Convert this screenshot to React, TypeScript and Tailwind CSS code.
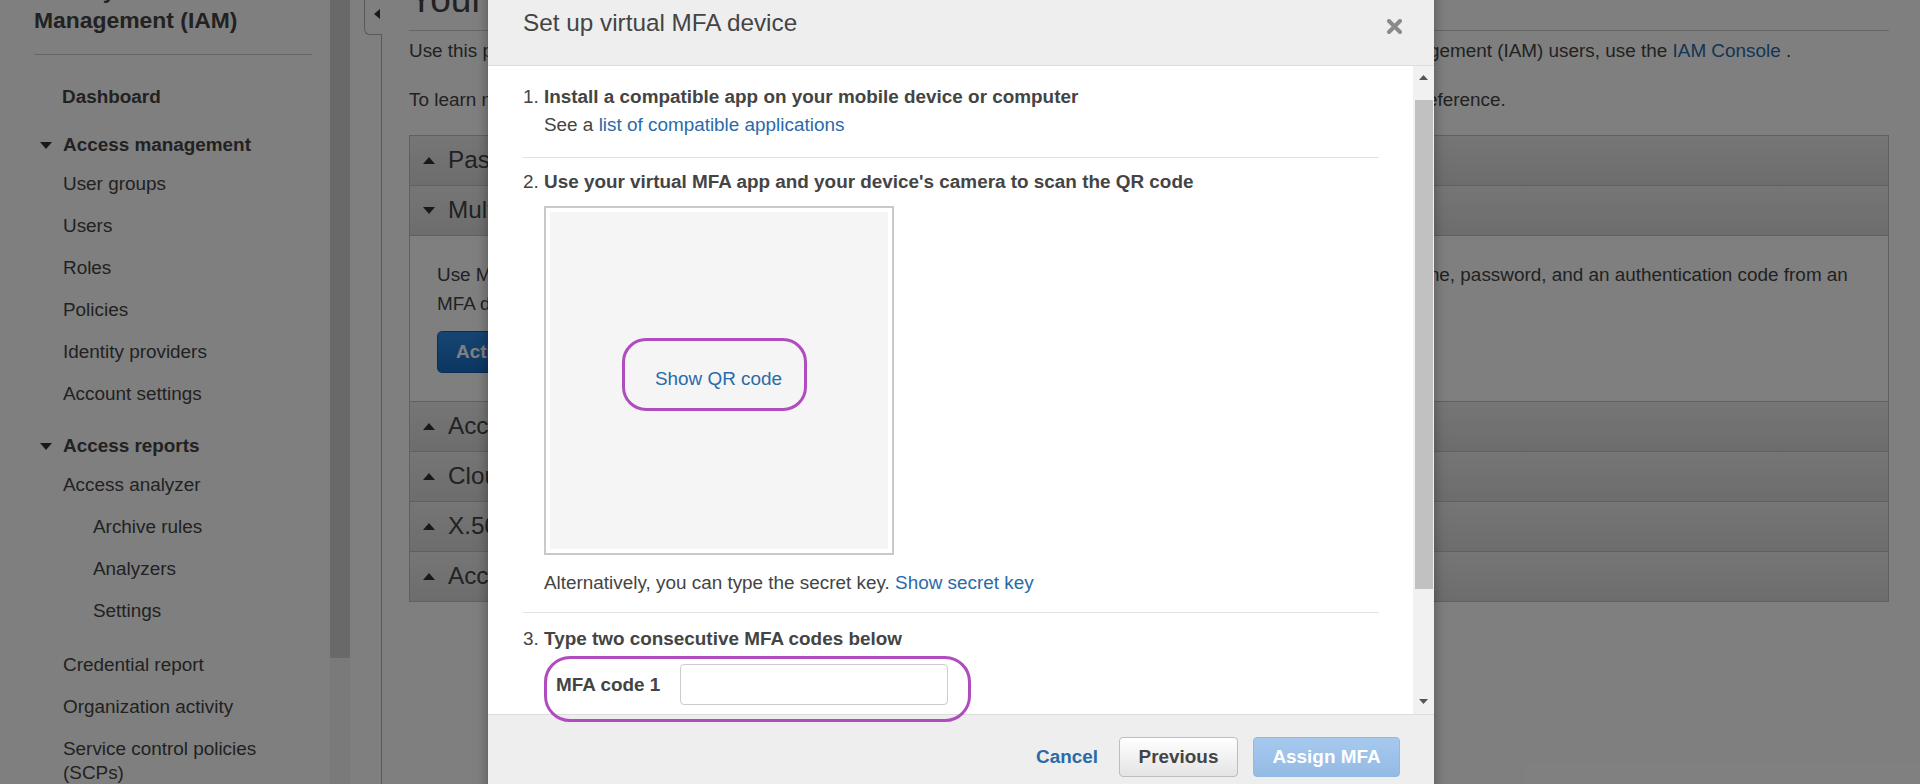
import React from "react";

const sections = [
  { title: "Password", open: false },
  { title: "Multi-factor authentication (MFA)", open: true },
  { title: "Access keys for CLI, SDK, & API access", open: false },
  { title: "CloudFront key pairs", open: false },
  { title: "X.509 certificate", open: false },
  { title: "Account identifiers", open: false },
];

const Caret = ({ dir }: { dir: "up" | "down" | "left" }) => {
  if (dir === "left") {
    return (
      <svg width="6" height="10" viewBox="0 0 6 10">
        <path d="M6 0 L0 5 L6 10 Z" fill="#333" />
      </svg>
    );
  }
  return (
    <svg width="12" height="7" viewBox="0 0 12 7" className="shrink-0">
      {dir === "up" ? (
        <path d="M0 7 L6 0 L12 7 Z" fill="#333" />
      ) : (
        <path d="M0 0 L12 0 L6 7 Z" fill="#333" />
      )}
    </svg>
  );
};

const NavItem = ({ label, sub }: { label: string; sub?: boolean }) => (
  <div
    className={`py-[9px] leading-[24px] text-[18.9px] text-[#444] ${
      sub ? "pl-[59px]" : "pl-[29px]"
    }`}
  >
    {label}
  </div>
);

const NavGroup = ({ label, mt }: { label: string; mt: string }) => (
  <div className={`flex h-[36px] items-center gap-[11px] pl-[6px] ${mt}`}>
    <Caret dir="down" />
    <span className="text-[18.9px] font-bold text-[#444]">{label}</span>
  </div>
);

const Sidebar = () => (
  <aside className="flex w-[350px] shrink-0">
    <div className="w-[330px] pl-[34px] pr-[18px]">
      <div className="mt-[-25px] border-b border-[#cfcfcf] pb-[19px] text-[22.9px] font-bold leading-[30px] text-[#444]">
        Identity and Access Management (IAM)
      </div>
      <div className="mt-[21px] pl-[28px] py-[9px] text-[18.9px] font-bold leading-[24px] text-[#444]">
        Dashboard
      </div>
      <NavGroup label="Access management" mt="mt-[9px]" />
      <NavItem label="User groups" />
      <NavItem label="Users" />
      <NavItem label="Roles" />
      <NavItem label="Policies" />
      <NavItem label="Identity providers" />
      <NavItem label="Account settings" />
      <NavGroup label="Access reports" mt="mt-[13px]" />
      <NavItem label="Access analyzer" />
      <NavItem label="Archive rules" sub />
      <NavItem label="Analyzers" sub />
      <NavItem label="Settings" sub />
      <div className="mt-[12px]">
        <NavItem label="Credential report" />
        <NavItem label="Organization activity" />
        <NavItem label="Service control policies (SCPs)" />
      </div>
    </div>
    <div className="w-[20px] bg-[#f4f4f4]">
      <div className="h-[658px] bg-[#d3d3d3]" />
    </div>
  </aside>
);

const MainContent = () => (
  <main className="min-w-0 flex-1 pl-[27px] pr-[31px] text-[#444]">
    <h1 className="mt-[-22px] border-b border-[#cccccc] pb-[8px] text-[37px] leading-[44px] whitespace-nowrap">
      Your Security Credentials
    </h1>
    <p className="mt-[8px] whitespace-nowrap text-[18.9px] leading-[24px]">
      Use this page to manage the credentials for your AWS account. To manage
      credentials for AWS Identity and Access Management (IAM) users, use the{" "}
      <span className="text-[#2a6aa8]">IAM Console</span> .
    </p>
    <p className="mt-[25px] whitespace-nowrap text-[18.9px] leading-[24px]">
      To learn more about the types of AWS credentials and how they're used, see{" "}
      <span className="text-[#2a6aa8]">AWS Security Credentials</span> in AWS General
      Reference.
    </p>
    <div className="mt-[23px] border border-[#c0c0c0]">
      {sections.map((s, i) => (
        <div key={s.title} className={i < sections.length - 1 ? "border-b border-[#c0c0c0]" : ""}>
          <div className="flex h-[49px] items-center gap-[13px] bg-linear-to-b from-[#ececec] to-[#dadada] pl-[13px]">
            <Caret dir={s.open ? "down" : "up"} />
            <span className="text-[24.3px] text-[#444]">{s.title}</span>
          </div>
          {s.open && (
            <div className="border-t border-[#c0c0c0] bg-white px-[27px] pt-[24px] pb-[28px]">
              <p className="whitespace-nowrap text-[18.9px] leading-[29px]">
                Use MFA to increase the security of your AWS environment. Signing into the
                AWS console with MFA requires a username, password, and an authentication
                code from an
                <br />
                MFA device.
              </p>
              <button className="mt-[13px] h-[42px] rounded-[5px] border border-[#0f5fae] bg-linear-to-b from-[#2e8ae6] to-[#1a6cc4] px-[18px] text-[18.9px] font-bold text-white">
                Activate MFA
              </button>
            </div>
          )}
        </div>
      ))}
    </div>
  </main>
);

const Link = ({ children }: { children: React.ReactNode }) => (
  <span className="text-[#2a6aa8]">{children}</span>
);

const Modal = () => (
  <div className="absolute left-[488px] top-[-20px] w-[946px] bg-white text-[18.9px] text-[#444] shadow-[0_0_12px_rgba(0,0,0,0.35)]">
    <div className="flex h-[86px] items-center justify-between border-b border-[#dddddd] bg-[#eeeeee] pl-[35px] pr-[32px] pt-[1px]">
      <span className="text-[24.3px]">Set up virtual MFA device</span>
      <svg width="15" height="15" viewBox="0 0 15 15" className="mt-[7px]">
        <path d="M2 2 L13 13 M13 2 L2 13" stroke="#8a8a8a" strokeWidth="4" strokeLinecap="round" />
      </svg>
    </div>

    <div className="flex h-[648px]">
      <div className="min-w-0 flex-1 overflow-hidden pl-[35px] pr-[34px] pt-[17px] leading-[28px]">
        <div className="flex">
          <span className="w-[21px] shrink-0">1.</span>
          <div>
            <div className="font-bold">Install a compatible app on your mobile device or computer</div>
            <div>
              See a <Link>list of compatible applications</Link>
            </div>
          </div>
        </div>

        <div className="mt-[18px] border-t border-[#e2e2e2]" />

        <div className="mt-[10px] flex">
          <span className="w-[21px] shrink-0">2.</span>
          <div>
            <div className="font-bold">
              Use your virtual MFA app and your device's camera to scan the QR code
            </div>
            <div className="mt-[10px] h-[349px] w-[350px] border-2 border-[#c9c9c9] bg-white p-[4px]">
              <div className="flex h-full w-full items-center justify-center bg-[#f5f5f5] pb-[4px] pr-[1px]">
                <Link>Show QR code</Link>
              </div>
            </div>
            <div className="mt-[14px]">
              Alternatively, you can type the secret key. <Link>Show secret key</Link>
            </div>
          </div>
        </div>

        <div className="mt-[15px] border-t border-[#e2e2e2]" />

        <div className="mt-[12px] flex">
          <span className="w-[21px] shrink-0">3.</span>
          <div>
            <div className="font-bold">Type two consecutive MFA codes below</div>
            <div className="mt-[11px] flex items-center">
              <span className="w-[136px] shrink-0 pl-[12px] font-bold">MFA code 1</span>
              <div className="h-[41px] w-[268px] rounded-[4px] border border-[#cccccc] bg-white" />
            </div>
          </div>
        </div>
      </div>

      <div className="flex w-[21px] shrink-0 flex-col items-center bg-[#f1f1f1]">
        <div className="flex h-[22px] items-center">
          <svg width="9" height="5" viewBox="0 0 9 5">
            <path d="M0 5 L4.5 0 L9 5 Z" fill="#555" />
          </svg>
        </div>
        <div className="mt-[12px] ml-[1px] h-[489px] w-[18px] bg-[#c1c1c1]" />
        <div className="mt-auto flex h-[24px] items-center pb-[2px]">
          <svg width="9" height="5" viewBox="0 0 9 5">
            <path d="M0 0 L9 0 L4.5 5 Z" fill="#555" />
          </svg>
        </div>
      </div>
    </div>

    <div className="flex h-[100px] items-start justify-end border-t border-[#dddddd] bg-[#eeeeee] pr-[34px] pt-[22px]">
      <span className="mr-[21px] flex h-[40px] items-center font-bold text-[#2a6aa8]">Cancel</span>
      <button className="h-[40px] w-[119px] rounded-[4px] border border-[#bdbdbd] bg-linear-to-b from-white to-[#e4e4e4] font-bold text-[#444]">
        Previous
      </button>
      <button className="ml-[15px] h-[40px] w-[147px] rounded-[4px] border border-[#91b9e3] bg-linear-to-b from-[#a6c9ee] to-[#94bbe5] font-bold text-white">
        Assign MFA
      </button>
    </div>

    <div className="absolute left-[134px] top-[358px] h-[73px] w-[185px] rounded-[24px] border-[3px] border-[#b14cc0]" />
    <div className="absolute left-[56px] top-[676px] h-[66px] w-[427px] rounded-[26px] border-[3px] border-[#b14cc0]" />
  </div>
);

export default function App() {
  return (
    <div className="relative h-[784px] w-[1920px] overflow-hidden bg-white font-['Liberation_Sans',Arial,sans-serif]">
      <div className="flex h-full">
        <Sidebar />
        <div className="w-[14px] shrink-0" />
        <div className="flex w-[18px] shrink-0 flex-col">
          <div className="flex h-[35px] items-center justify-end rounded-bl-[6px] border-b border-l border-[#b0b0b0] pr-[2px] pb-[6px]">
            <Caret dir="left" />
          </div>
          <div className="flex-1 border-r border-[#b0b0b0]" />
        </div>
        <MainContent />
      </div>
      <div className="absolute inset-0 bg-black/50" />
      <Modal />
    </div>
  );
}
